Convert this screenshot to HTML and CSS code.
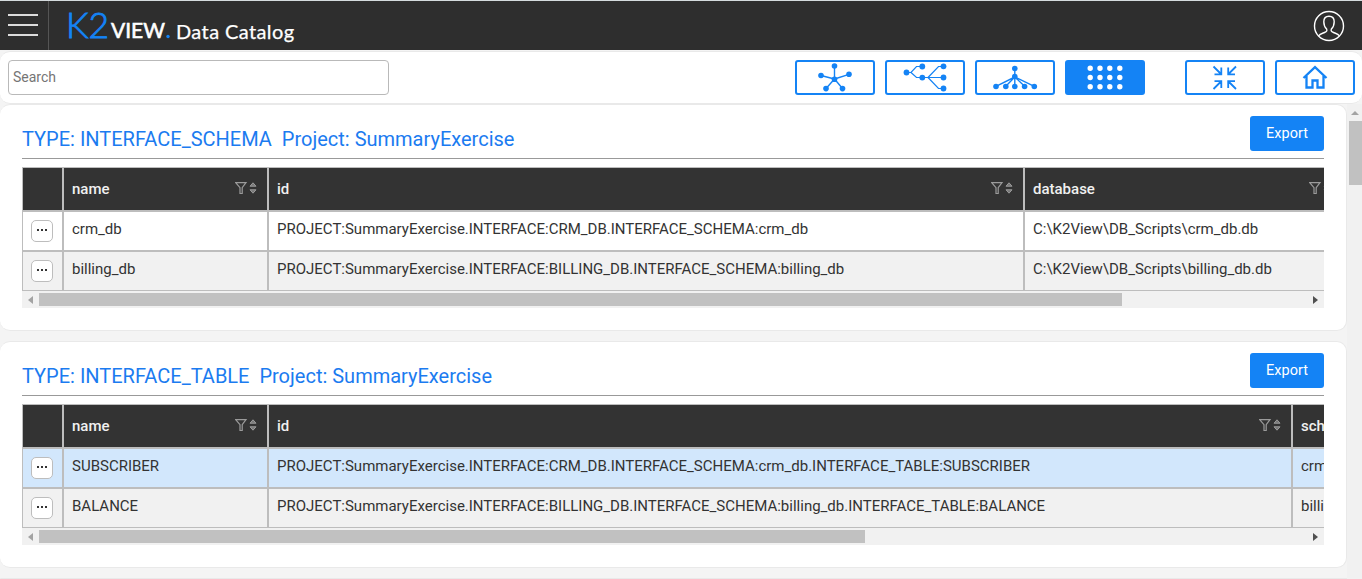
FILE: index.html
```html
<!DOCTYPE html>
<html lang="en">
<head>
<meta charset="utf-8">
<title>Data Catalog</title>
<link rel="stylesheet" href="styles.css">
</head>
<body>
<svg class="defs" width="0" height="0">
  <symbol id="sort" viewBox="0 0 22 14">
    <path d="M.7 1.6H11L7.2 6.6V12.5H5V6.6Z" fill="none" stroke="#9b9b9b" stroke-width="1.2"/>
    <path d="M15 5.2 18 1.8 21 5.2ZM15 8.8H21L18 12.2Z" fill="#777" stroke="#9b9b9b" stroke-width="1"/>
  </symbol>
</svg>
<header class="topbar">
  <button class="menu"><i></i><i></i><i></i></button>
  <div class="brand">
    <svg class="logo" width="106" height="44" viewBox="0 0 106 44">
      <text class="logo-k" x="-1" y="32" textLength="43" lengthAdjust="spacingAndGlyphs">K2</text>
      <text class="logo-view" x="44" y="32" textLength="54" lengthAdjust="spacingAndGlyphs">VIEW</text>
      <circle cx="101" cy="30.500" r="1.700" fill="#1483f5"/>
    </svg>
    <span class="title">Data Catalog</span>
  </div>
  <svg class="user" width="32" height="32" viewBox="0 0 32 32" fill="none" stroke="#fff" stroke-width="1.4">
    <circle cx="16" cy="16" r="14.5"/>
    <path d="M5.500 26C7 23.600 9.500 23.300 11.500 22.500C14 21.600 14.200 20.500 13.600 19C11.500 17 10.800 14.500 10.800 11.800C10.800 8.300 12.700 6.200 16 6.200S21.200 8.300 21.200 11.800C21.200 14.500 20.500 17 18.400 19C17.800 20.500 18 21.600 20.500 22.500C22.500 23.300 25 23.600 26.500 26"/>
  </svg>
</header>
<div class="toolbar">
  <input class="search" type="text" placeholder="Search">
  <div class="views">
    <button class="tool"><svg width="76" height="31" viewBox="0 0 76 31"><g fill="none" stroke="#1483f5" stroke-width="1.400"><path d="M37.500 4V17L24 13.500M37.500 17 52 12.300M37.500 17 29 26.500M37.500 17 45.500 26.500"/></g><g fill="#1483f5"><circle cx="37.500" cy="4" r="2.800"/><circle cx="24" cy="13.500" r="2.800"/><circle cx="52" cy="12.300" r="2.800"/><circle cx="29" cy="26.600" r="2.800"/><circle cx="45.500" cy="26.600" r="2.800"/><circle cx="37.500" cy="17.200" r="2.800"/></g></svg></button>
    <button class="tool"><svg width="76" height="31" viewBox="0 0 76 31"><path d="M19 10.500H24L29.500 4.500H35M24 10.500 29.500 15.500H56M41 15.500 51.500 4.500H56M41 15.500 51.500 26.500H56" fill="none" stroke="#1483f5" stroke-width="1.200"/><g fill="#1483f5"><circle cx="19.500" cy="10.500" r="2.900"/><circle cx="35.300" cy="4.500" r="2.900"/><circle cx="35.300" cy="15.600" r="2.900"/><circle cx="56.500" cy="4.300" r="2.900"/><circle cx="56.500" cy="15.500" r="2.900"/><circle cx="56.500" cy="26.500" r="2.900"/></g></svg></button>
    <button class="tool"><svg width="76" height="31" viewBox="0 0 76 31"><path d="M37.800 6.500V24.300M37.800 15 19 24.300M37.800 15 28.800 24.300M37.800 15 47.600 24.300M37.800 15 57.300 24.300" fill="none" stroke="#1483f5" stroke-width="1.400"/><g fill="#1483f5"><circle cx="37.800" cy="6.500" r="2.800"/><circle cx="37.800" cy="14.500" r="2.800"/><circle cx="19" cy="24.500" r="2.800"/><circle cx="28.800" cy="24.500" r="2.800"/><circle cx="37.800" cy="24.500" r="2.800"/><circle cx="47.600" cy="24.500" r="2.800"/><circle cx="57.300" cy="24.500" r="2.800"/></g></svg></button>
    <button class="tool active"><svg width="76" height="31" viewBox="0 0 76 31"><path d="M23.200 6.300h.01M33 6.300h.01M42.800 6.300h.01M52.800 6.300h.01M23.200 15.500h.01M33 15.500h.01M42.800 15.500h.01M52.800 15.500h.01M23.200 24.800h.01M33 24.800h.01M42.800 24.800h.01M52.800 24.800h.01" stroke="#fff" stroke-width="5.400" stroke-linecap="round"/></svg></button>
  </div>
  <div class="actions">
    <button class="tool"><svg width="76" height="31" viewBox="0 0 76 31"><path d="M26.500 4.500 34 12M27.500 12.300H34.300V5.500M49 4.500 41.500 12M41.200 5.500V12.300H48M26.500 27 34 19.500M27.500 19.200H34.300V26M49 27 41.500 19.500M41.200 26V19.200H48" fill="none" stroke="#1483f5" stroke-width="1.800"/></svg></button>
    <button class="tool"><svg width="76" height="31" viewBox="0 0 76 31"><path d="M26.500 16 38 5.200 49.500 16M29.500 14V25.500H35.500V18.500H40.500V25.500H46.500V14" fill="none" stroke="#1483f5" stroke-width="2.300"/></svg></button>
  </div>
</div>
<div class="workspace">
  <main class="cards">
    <section class="card">
      <div class="card-head"><h2>TYPE: INTERFACE_SCHEMA&nbsp; Project: SummaryExercise</h2><button class="export">Export</button></div>
      <div class="grid schema">
        <div class="row head"><div></div><div>name<svg width="22" height="14"><use href="#sort"/></svg></div><div>id<svg width="22" height="14"><use href="#sort"/></svg></div><div>database<svg width="22" height="14"><use href="#sort"/></svg></div></div>
        <div class="row"><div><button class="more"><i></i><i></i><i></i></button></div><div>crm_db</div><div>PROJECT:SummaryExercise.INTERFACE:CRM_DB.INTERFACE_SCHEMA:crm_db</div><div>C:\K2View\DB_Scripts\crm_db.db</div></div>
        <div class="row alt"><div><button class="more"><i></i><i></i><i></i></button></div><div>billing_db</div><div>PROJECT:SummaryExercise.INTERFACE:BILLING_DB.INTERFACE_SCHEMA:billing_db</div><div>C:\K2View\DB_Scripts\billing_db.db</div></div>
      </div>
      <div class="hscroll"><i class="arrow left"></i><i class="thumb wide"></i><i class="arrow right"></i></div>
    </section>
    <section class="card">
      <div class="card-head"><h2>TYPE: INTERFACE_TABLE&nbsp; Project: SummaryExercise</h2><button class="export">Export</button></div>
      <div class="grid table">
        <div class="row head"><div></div><div>name<svg width="22" height="14"><use href="#sort"/></svg></div><div>id<svg width="22" height="14"><use href="#sort"/></svg></div><div>schema</div></div>
        <div class="row selected"><div><button class="more"><i></i><i></i><i></i></button></div><div>SUBSCRIBER</div><div>PROJECT:SummaryExercise.INTERFACE:CRM_DB.INTERFACE_SCHEMA:crm_db.INTERFACE_TABLE:SUBSCRIBER</div><div>crm_db</div></div>
        <div class="row alt"><div><button class="more"><i></i><i></i><i></i></button></div><div>BALANCE</div><div>PROJECT:SummaryExercise.INTERFACE:BILLING_DB.INTERFACE_SCHEMA:billing_db.INTERFACE_TABLE:BALANCE</div><div>billing_db</div></div>
      </div>
      <div class="hscroll"><i class="arrow left"></i><i class="thumb"></i><i class="arrow right"></i></div>
    </section>
    <section class="card last"></section>
  </main>
  <aside class="vscroll"><i class="arrow up"></i><i class="vthumb"></i></aside>
</div>
</body>
</html>
```
FILE: styles.css
```css
* { box-sizing: border-box; }
body {
  margin: 0;
  height: 579px;
  overflow: hidden;
  display: flex;
  flex-direction: column;
  background: #f4f4f4;
  color: #333;
  font-family: Roboto, sans-serif;
}
button { padding: 0; font-family: inherit; }
.defs { position: absolute; }

.topbar {
  height: 50px;
  flex: none;
  display: flex;
  align-items: stretch;
  background: #2e2e2e;
  border-top: 1px solid #d5dbde;
}
.menu {
  width: 49px;
  padding: 0 10px 2px 8px;
  display: flex;
  flex-direction: column;
  justify-content: center;
  gap: 8px;
  background: none;
  border: 0;
  border-right: 1px solid #555;
}
.menu i { height: 2px; background: #dcdcdc; }
.brand { display: flex; align-items: flex-start; padding: 5px 0 0 18px; }
.logo { overflow: visible; }
.logo-k { font: 300 35px Lato, sans-serif; fill: #1483f5; stroke: #1483f5; stroke-width: .9px; }
.logo-view { font: 400 21px Lato, sans-serif; fill: #fff; stroke: #fff; stroke-width: .6px; }
.title { margin-left: 3px; padding-top: 11px; color: #fff; font: 400 20px/28px Lato, sans-serif; letter-spacing: .4px; -webkit-text-stroke: .25px #fff; white-space: nowrap; }
.user { margin: 9px 17px 0 auto; }

.toolbar {
  flex: none;
  height: 53px;
  margin-top: 1px;
  padding: 8px 7px 0 8px;
  display: flex;
  align-items: flex-start;
  background: #fff;
  border: solid #e9e9e9;
  border-width: 1px 0 1px;
  border-radius: 10px;
}
.search {
  width: 381px;
  height: 35px;
  padding: 0 4px 2px;
  border: 1px solid #b9b9b9;
  border-radius: 4px;
  font: 14px Roboto, sans-serif;
}
.search::placeholder { color: #757575; }
.views { display: flex; gap: 10px; margin-left: auto; }
.actions { display: flex; gap: 10px; margin-left: 40px; }
.tool { width: 80px; height: 35px; background: #fff; border: 2px solid #1483f5; border-radius: 3px; }
.tool svg { display: block; }
.tool.active { background: #1483f5; }

.workspace { flex: 1; min-height: 0; display: flex; overflow: hidden; }
.cards { width: 1347px; display: flex; flex-direction: column; gap: 10px; }
.card {
  flex: none;
  height: 227px;
  padding: 0 22px;
  background: #fff;
  border: solid #e9e9e9;
  border-width: 1px 1px 1px 0;
  border-radius: 10px;
}
.card.last { flex: 1; height: auto; min-height: 0; padding: 0; border-bottom: 0; border-radius: 10px 10px 0 0; }
.card-head {
  height: 54px;
  padding-top: 11px;
  display: flex;
  justify-content: space-between;
  border-bottom: 1px solid #999;
}
h2 { margin: 11px 0 0; font-size: 20px; line-height: 24px; font-weight: 400; color: #1b7bf0; white-space: nowrap; }
.export { width: 74px; height: 35px; border: 0; border-radius: 3px; background: #1483f5; color: #fff; font-size: 14.500px; }
.grid { margin-top: 8px; overflow: hidden; font-size: 15px; }
.row { display: grid; height: 40px; white-space: nowrap; background: #fff; }
.schema .row { width: 1360px; grid-template-columns: 41px 205px 756px 318px; }
.table .row { width: 1500px; grid-template-columns: 41px 205px 1024px 230px; }
.row > div { display: flex; align-items: center; padding: 0 9px 4px 8px; border: 1px solid #bdbdbd; }
.row > div:first-child { padding: 0 0 0 8px; }
.row.head { height: 44px; background: #333; }
.row.head > div { padding: 0 10px 0 8px; justify-content: space-between; color: #f0f0f0; font-weight: 500; }
.row.head svg { margin-bottom: 2px; }
.row.alt { background: #f1f1f1; }
.row.selected { background: #d2e7fc; }
.more { display: flex; align-items: center; justify-content: center; gap: 2px; width: 22px; height: 22px; padding-bottom: 2px; background: #fff; border: 1px solid #bdbdbd; border-radius: 5px; }
.more i { width: 2px; height: 2px; background: #333; }

.hscroll { display: flex; align-items: center; justify-content: space-between; height: 17px; padding: 0 6px; background: #f1f1f1; }
.thumb { width: 826px; height: 13px; margin: 0 auto 0 6px; background: #c1c1c1; }
.thumb.wide { width: 1083px; }
.arrow { border: 4px solid transparent; }
.left { border-left: 0; border-right: 5px solid #a3a3a3; }
.right { border-right: 0; border-left: 5px solid #505050; }
.up { border-top: 0; border-bottom: 4px solid #a3a3a3; }
.vscroll { width: 15px; padding-top: 7px; display: flex; flex-direction: column; align-items: center; background: #f1f1f1; }
.vthumb { width: 13px; height: 64px; margin: 6px 0 0 2px; background: #c1c1c1; }
```
